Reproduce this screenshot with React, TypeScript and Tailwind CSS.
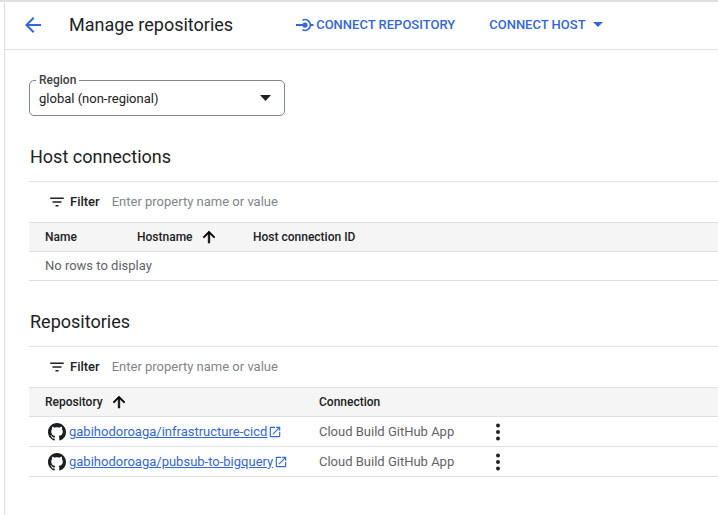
const blue = 'text-[#3367d6]';

function ArrowUp() {
  return (
    <svg width="18" height="18" viewBox="0 0 24 24" className="fill-black stroke-black stroke-[0.8]">
      <path d="M4 12l1.41 1.41L11 7.83V20h2V7.83l5.58 5.59L20 12l-8-8-8 8z" />
    </svg>
  );
}

function FilterBar() {
  return (
    <div className="flex h-[40px] items-center pl-[19px]">
      <svg width="18" height="18" viewBox="0 0 24 24" className="fill-[#202124]">
        <path d="M10 18h4v-2h-4v2zM3 6v2h18V6H3zm3 7h12v-2H6v2z" />
      </svg>
      <span className="ml-[4px] text-[13px] font-medium text-[#202124]">Filter</span>
      <span className="ml-[12px] text-[13px] text-[#80868b]">Enter property name or value</span>
    </div>
  );
}

function GithubMark() {
  return (
    <svg width="18" height="18" viewBox="0 0 16 16" className="fill-[#1b1f23]">
      <path d="M8 0C3.58 0 0 3.58 0 8c0 3.54 2.29 6.53 5.47 7.59.4.07.55-.17.55-.38 0-.19-.01-.82-.01-1.49-2.01.37-2.53-.49-2.69-.94-.09-.23-.48-.94-.82-1.13-.28-.15-.68-.52-.01-.53.63-.01 1.08.58 1.23.82.72 1.21 1.87.87 2.33.66.07-.52.28-.87.51-1.07-1.78-.2-3.64-.89-3.64-3.95 0-.87.31-1.59.82-2.15-.08-.2-.36-1.02.08-2.12 0 0 .67-.21 2.2.82.64-.18 1.32-.27 2-.27s1.36.09 2 .27c1.53-1.04 2.2-.82 2.2-.82.44 1.1.16 1.92.08 2.12.51.56.82 1.27.82 2.15 0 3.07-1.87 3.75-3.65 3.95.29.25.54.73.54 1.48 0 1.07-.01 1.93-.01 2.2 0 .21.15.46.55.38A8.01 8.01 0 0016 8c0-4.42-3.58-8-8-8z" />
    </svg>
  );
}

function ExternalLink() {
  return (
    <svg width="14" height="14" viewBox="0 0 24 24" className="fill-[#3367d6]">
      <path d="M19 19H5V5h7V3H5a2 2 0 00-2 2v14a2 2 0 002 2h14c1.1 0 2-.9 2-2v-7h-2v7zM14 3v2h3.59l-9.83 9.83 1.41 1.41L19 6.41V10h2V3h-7z" />
    </svg>
  );
}

function Kebab() {
  return (
    <svg width="24" height="24" viewBox="0 0 24 24" className="fill-[#202124]">
      <circle cx="12" cy="5.5" r="2" />
      <circle cx="12" cy="12" r="2" />
      <circle cx="12" cy="18.5" r="2" />
    </svg>
  );
}

function RepoRow({ name }: { name: string }) {
  return (
    <div className="flex h-[30px] items-center border-b border-[#e0e0e0] text-[#5f6368]">
      <div className="flex w-[290px] items-center pl-[19px]">
        <GithubMark />
        <a className={`ml-[3px] text-[13px] underline ${blue}`}>{name}</a>
        <span className="ml-[1px] flex"><ExternalLink /></span>
      </div>
      <div className="w-[167px] text-[13px]">Cloud Build GitHub App</div>
      <Kebab />
    </div>
  );
}

export default function App() {
  return (
    <div className="h-[515px] w-[718px] overflow-hidden border-t-2 border-[#e0e0e0] bg-white font-['Roboto',sans-serif]">
      <div className="ml-[4px] h-full border-l border-[#e0e0e0]">
        <div className="flex h-[48px] items-center border-b border-[#e0e0e0] pb-[2px]">
          <svg width="24" height="24" viewBox="0 0 24 24" className="ml-[16px] fill-[#3367d6]">
            <path d="M20 11H7.83l5.59-5.59L12 4l-8 8 8 8 1.41-1.41L7.83 13H20v-2z" />
          </svg>
          <h1 className="ml-[24px] text-[18px] text-[#202124]">Manage repositories</h1>
          <div className={`ml-[63px] flex items-center text-[13px] font-medium ${blue}`}>
            <svg width="18" height="14" viewBox="0 0 18 14" className="fill-none stroke-[#3367d6]">
              <path d="M0 7H9" strokeWidth="2" />
              <circle cx="9" cy="7" r="2.6" className="fill-[#3367d6]" strokeWidth="0" />
              <path d="M6.5 2.2A5.4 5.4 0 1 1 6.5 11.8" strokeWidth="1.6" />
              <path d="M14.4 7H17.5" strokeWidth="2" />
            </svg>
            <span className="ml-[2px]">CONNECT REPOSITORY</span>
            <span className="ml-[34px]">CONNECT HOST</span>
            <svg width="10" height="5" viewBox="0 0 10 5" className="ml-[7px] fill-[#3367d6]">
              <path d="M0 0h10L5 5z" />
            </svg>
          </div>
        </div>

        <div className="pl-[24px]">
          <div className="relative mt-[30px] flex h-[36px] w-[256px] items-center justify-between rounded-[5px] border border-[#80868b] pl-[9px] pr-[13px]">
            <span className="absolute left-[6px] top-[-8px] bg-white px-[3px] text-[12px] leading-[14px] font-medium text-[#3c4043]">Region</span>
            <span className="pt-[1px] text-[13px] text-[#202124]">global (non-regional)</span>
            <svg width="11" height="6" viewBox="0 0 11 6" className="fill-[#202124]">
              <path d="M0 0h11L5.5 6z" />
            </svg>
          </div>

          <h2 className="mt-[29px] pl-[1px] text-[18px] leading-[24px] text-[#202124]">Host connections</h2>
          <div className="mt-[12px] border-t border-[#e0e0e0]">
            <FilterBar />
            <div className="flex h-[30px] items-center border-y border-[#e0e0e0] bg-[#f5f5f5] text-[12px] font-medium text-[#202124]">
              <span className="ml-[16px] w-[92px]">Name</span>
              <span className="w-[63px]">Hostname</span>
              <span className="w-[53px]"><ArrowUp /></span>
              <span>Host connection ID</span>
            </div>
            <div className="flex h-[29px] items-center border-b border-[#e0e0e0] pl-[16px] text-[13px] text-[#5f6368]">No rows to display</div>
          </div>

          <h2 className="mt-[29px] pl-[1px] text-[18px] leading-[24px] text-[#202124]">Repositories</h2>
          <div className="mt-[12px] border-t border-[#e0e0e0]">
            <FilterBar />
            <div className="flex h-[30px] items-center border-y border-[#e0e0e0] bg-[#f5f5f5] text-[12px] font-medium text-[#202124]">
              <span className="ml-[16px] w-[65px]">Repository</span>
              <span className="w-[209px]"><ArrowUp /></span>
              <span>Connection</span>
            </div>
            <RepoRow name="gabihodoroaga/infrastructure-cicd" />
            <RepoRow name="gabihodoroaga/pubsub-to-bigquery" />
          </div>
        </div>
      </div>
    </div>
  );
}
